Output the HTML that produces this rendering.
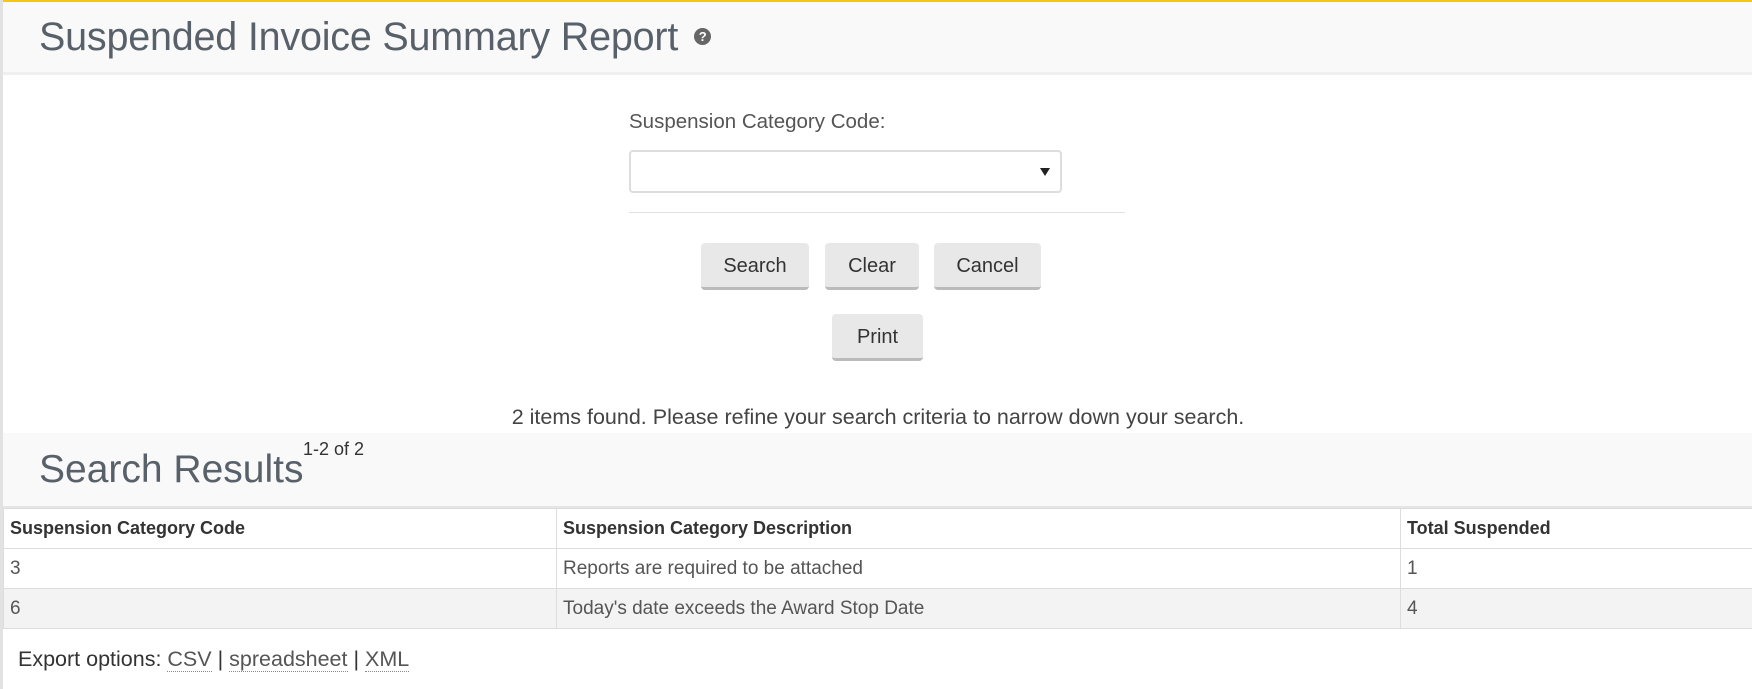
<!DOCTYPE html>
<html><head><meta charset="utf-8"><style>
*{box-sizing:border-box;margin:0;padding:0}
body{width:1752px;height:689px;overflow:hidden;background:#fff;font-family:"Liberation Sans",sans-serif;color:#444;position:relative}
.top{position:absolute;left:0;top:0;width:1752px;height:2px;background:#f5c518}
.lb{position:absolute;left:0;top:0;width:3px;height:689px;background:#e2e2e2}
.hdr{position:absolute;left:3px;top:2px;right:0;height:73px;background:#f9f9f9;border-bottom:3px solid #efefef}
.t1{position:absolute;left:36px;top:13px;font-size:39.5px;color:#58616a;letter-spacing:-0.2px}
.q{display:inline-block;width:17px;height:17px;border-radius:50%;background:#666;color:#fff;font-size:13px;font-weight:bold;text-align:center;line-height:17px;vertical-align:middle;margin-left:16px;position:relative;top:-3px}
.lbl{position:absolute;left:629px;top:110px;font-size:20.5px;color:#555}
.sel{position:absolute;left:629px;top:150px;width:433px;height:43px;border:2px solid #ddd;border-radius:4px;background:#fff}
.sel:after{content:"";position:absolute;right:10px;top:16px;border-left:5px solid transparent;border-right:5px solid transparent;border-top:8px solid #222}
.hr{position:absolute;left:629px;top:212px;width:496px;height:1px;background:#e2e2e2}
.btn{position:absolute;height:47px;background:#e8e8e8;border-radius:4px;border-bottom:3px solid #bbb;font-size:20px;color:#333;text-align:center;line-height:46px}
.msg{position:absolute;left:0;width:1756px;text-align:center;top:405px;font-size:21.5px;color:#444}
.res{position:absolute;left:3px;top:433px;right:0;height:75px;background:#f9f9f9;border-bottom:2px solid #e6e6e6}
.t2{position:absolute;left:36px;top:15px;font-size:39px;color:#58616a}
.sup{position:absolute;left:300px;top:6px;font-size:18px;color:#333}
table{position:absolute;left:3px;top:508px;width:1752px;border-collapse:collapse;font-size:19px}
td{height:40px;border:1px solid #ddd;padding-left:6px;color:#555}
tr.h td{font-weight:bold;color:#333;font-size:18px}
tr.g td{background:#f3f3f3}
.exp{position:absolute;left:18px;top:647px;font-size:21.5px;color:#333}
.exp span{border-bottom:1px dotted #888;color:#555}
</style></head><body>
<div class="top"></div><div class="lb"></div>
<div class="hdr"><div class="t1">Suspended Invoice Summary Report<span class="q">?</span></div></div>
<div class="lbl">Suspension Category Code:</div>
<div class="sel"></div>
<div class="hr"></div>
<div class="btn" style="left:701px;top:243px;width:108px">Search</div>
<div class="btn" style="left:825px;top:243px;width:94px">Clear</div>
<div class="btn" style="left:934px;top:243px;width:107px">Cancel</div>
<div class="btn" style="left:832px;top:314px;width:91px">Print</div>
<div class="msg">2 items found. Please refine your search criteria to narrow down your search.</div>
<div class="res"><div class="t2">Search Results</div><div class="sup">1-2 of 2</div></div>
<table>
<tr class="h"><td style="width:553px">Suspension Category Code</td><td style="width:844px">Suspension Category Description</td><td>Total Suspended</td></tr>
<tr><td>3</td><td>Reports are required to be attached</td><td>1</td></tr>
<tr class="g"><td>6</td><td>Today's date exceeds the Award Stop Date</td><td>4</td></tr>
</table>
<div class="exp">Export options: <span>CSV</span> | <span>spreadsheet</span> | <span>XML</span></div>
</body></html>
